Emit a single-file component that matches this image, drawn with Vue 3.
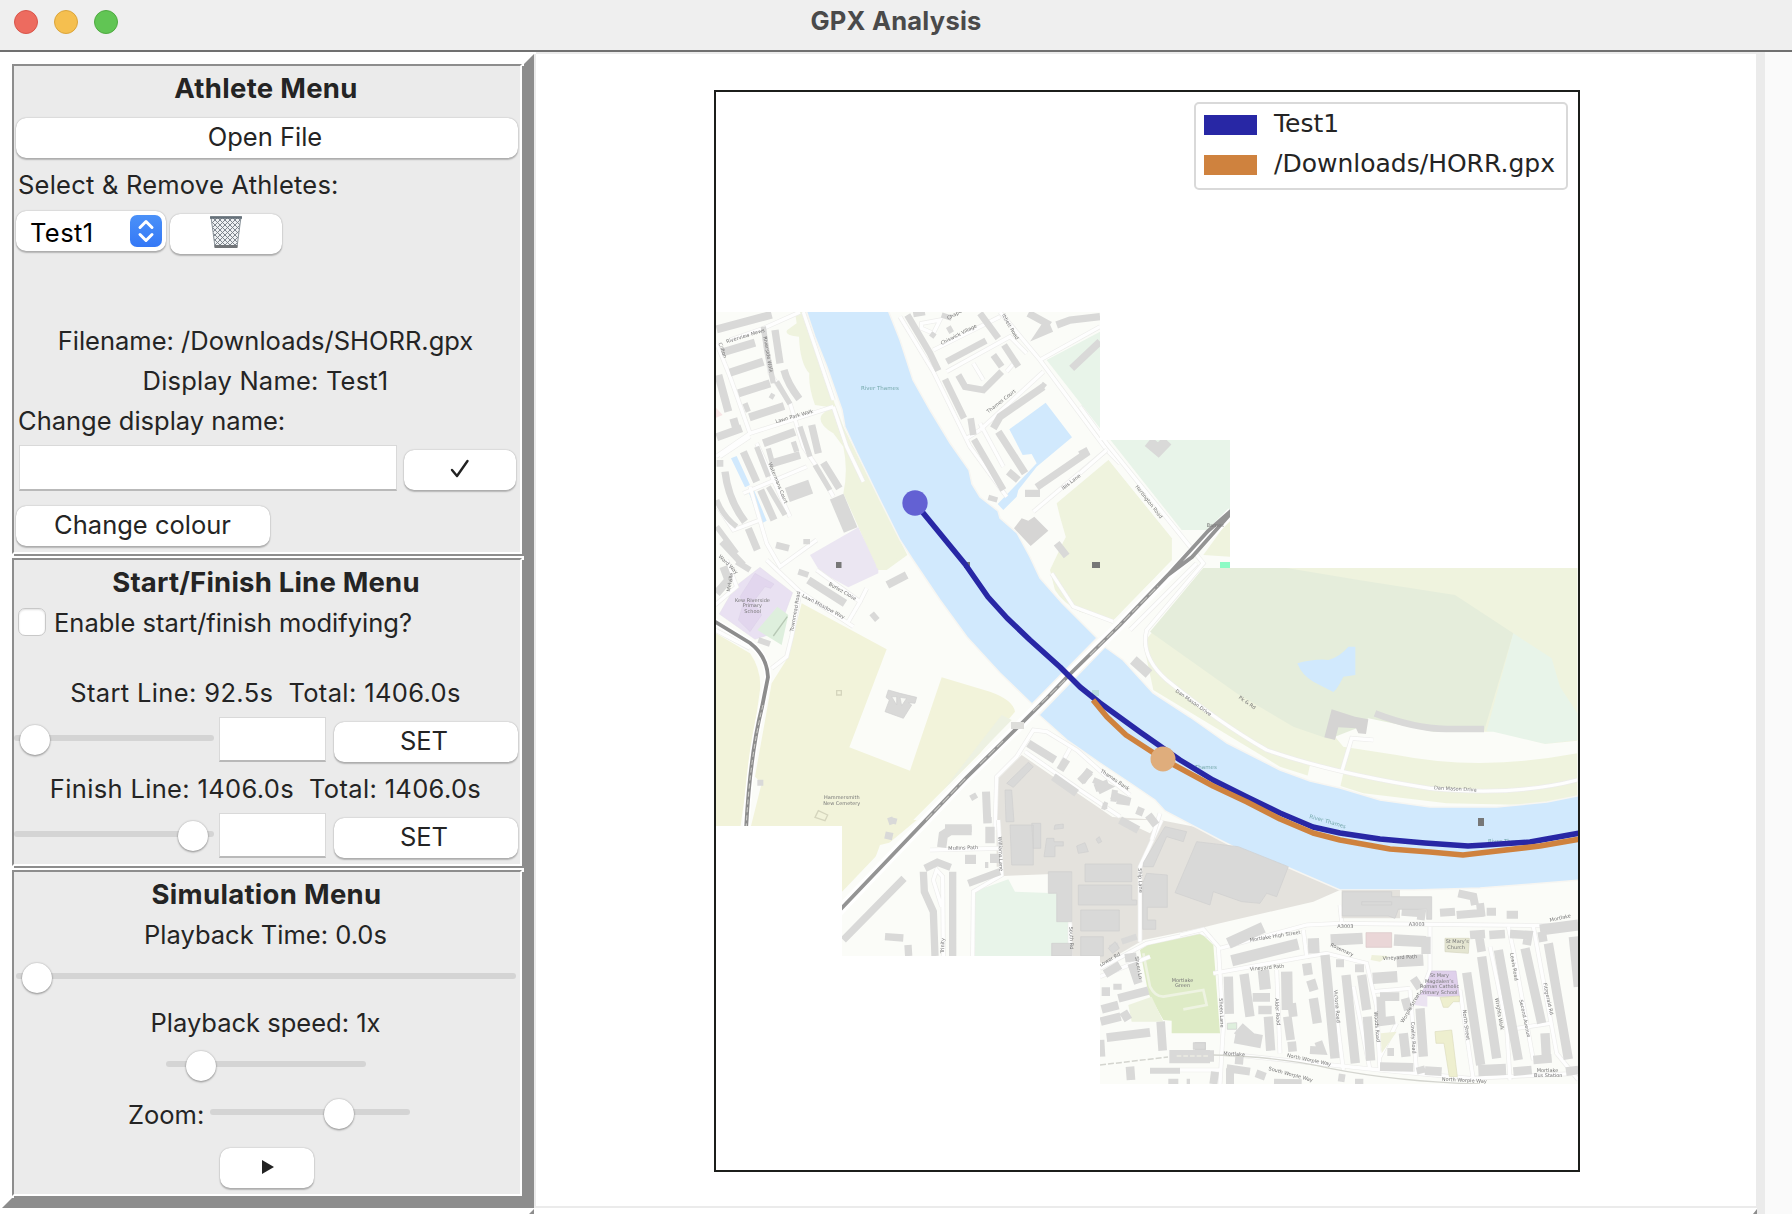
<script setup>
const sheets = [
  {
    at: 'translate(700 300) scale(.33333)',
    roads: [
      'M48 470L150 400L400 320', 'M50 130L90 230L150 400', 'M90 120L190 85L300 36', 'M190 85L210 220L270 310L310 440L350 500L400 590', 'M130 580L320 500',
      'M150 410L60 470M150 560L200 730L240 800L350 720', 'M170 430L270 650', 'M400 320L440 440L490 545', 'M310 36L400 300', 'M40 600L100 690L180 660',
      'M600 50L700 215L810 440L920 590', 'M900 36L1020 180L1220 450L1260 490', 'M1020 180L1200 80', 'M700 150L900 50', 'M740 215L930 110L980 160',
      'M840 390L1030 215', 'M840 370L910 500', 'M1220 450L1000 635', 'M665 70L720 60L700 100L665 85Z', 'M820 190L850 240', 'M920 215L950 180', 'M800 415L840 390'
    ],
    blocks: [
      [24, 'M50 88L215 44M65 158L165 128M90 218L190 185M115 280L210 250M148 352L252 318M50 412L125 385M55 225L85 335M100 355L110 390M215 490L300 465M190 430L285 395'],
      [22, 'M225 90L240 190M252 210Q262 250 298 297M335 375L355 460M370 488L418 565M130 455L170 545M182 570L222 660M75 515Q85 600 135 665M145 685L172 750'],
      [16, 'M190 80L200 150L220 250M230 245L270 312M300 380L330 470M345 495L390 570M170 440L205 530M205 560L255 645M50 600Q70 650 110 680M135 310L145 335M280 425L290 455M50 680L110 760M205 445L220 500'],
      [44, 'M262 585L332 560'], [44, 'M410 590L452 690'], [20, 'M228 735L267 745M65 725L130 795M50 490L70 490'],
      [20, 'M622 45L690 160L715 212M735 238L792 355M812 355L820 405M822 418L910 570M740 185L858 122M840 40L895 115M912 135L955 200M775 225L795 260L850 270L905 215M880 165L905 200'],
      [22, 'M1030 260L900 350L880 385M895 395L975 520M925 515L955 540M1010 562L1165 455M975 580L1020 580M1070 730L1100 768M985 40L1040 70L1020 100L1055 85M1070 75L1110 60L1200 50M1115 205L1200 125'],
      [16, 'M640 44L675 38M745 80L755 98M692 100L705 110M725 45L755 55M865 592L892 600M1025 262L1035 250M310 725L330 725M210 285L222 292']
    ],
    names: [[80, 130, -17, 'Riverview Mews'], [190, 110, 80, 'Riverside Walk'], [228, 370, -16, 'Lawn Park Walk'], [205, 490, 68, 'Watermans Court'], [55, 130, 70, 'Clifton'], [725, 135, -27, 'Chiswick Village'], [745, 60, -30, 'Chapel'], [865, 340, -38, 'Thames Court'], [1090, 570, -38, 'Ibis Lane'], [905, 45, 60, 'Ibbett Road'], [55, 770, 45, 'Ward Way']]
  },
  {
    at: 'translate(700 560) scale(.33333)',
    roads: [
      'M200 0L300 95L460 200', 'M300 95L275 230L260 290L215 325', 'M350 30L480 125L445 185', 'M480 125L500 85', 'M45 135L110 80L80 0',
      'M1290 705L1220 650L1130 570L1040 515L1000 510L950 590L890 650L885 810', 'M975 575L1140 690L1260 770', 'M1110 565L1085 610', 'M1055 40L1120 140L1240 185', 'M45 210L150 265'
    ],
    blocks: [
      [24, 'M325 60L435 130M562 75L620 45M985 550L1065 600M1060 650L1130 700M858 695L862 790M735 805L815 805M1080 630L1100 598M1145 665L1170 630M50 100L85 60L70 20'],
      [18, 'M295 35L325 45M515 160L532 180M175 240L210 252M110 5L150 30M172 668L190 668M570 780L590 785M1180 660L1225 680L1195 695M1245 690L1240 725M1208 738L1222 738M812 715L830 705']
    ],
    names: [[385, 75, 30, 'Burlez Close'], [305, 110, 28, 'Lawn Meadow Way'], [280, 215, -80, 'Townmead Road'], [105, 125, 0, 'Kew Riverside'], [128, 142, 0, 'Primary'], [133, 158, 0, 'School'], [372, 717, 0, 'Hammersmith'], [370, 735, 0, 'New Cemetery'], [90, 95, -80, 'Melville']]
  },
  {
    at: 'translate(830 820) scale(.33333)',
    roads: [
      'M505 0L515 165L430 215L428 408', 'M300 90L505 85', 'M340 408L338 170L320 150L310 180L335 260', 'M995 0L930 140L930 365', 'M810 445L950 370L1110 335L1140 350', 'M720 310L720 408', 'M810 470L960 410'
    ],
    blocks: [
      [28, 'M335 82L340 45L360 32L425 32M480 20L480 70M480 115L510 115M405 118L438 118'],
      [22, 'M415 190L510 155M40 360L222 175M280 155L283 215L310 275L315 408M368 155L368 408M285 145L322 127L362 142M165 350L220 354M234 375L236 408M175 5L190 0M165 45L188 50'],
      [26, 'M825 462L870 435M815 515L840 515M815 568L865 555M812 605L872 590M885 415L920 410M905 430L925 490M865 535L955 512M880 575L895 600M830 653L960 637M992 605L998 692M900 740L903 780M810 660L813 710M1095 680L1128 680'],
      [18, 'M960 752L1050 752M850 500L875 500M840 385L865 375M875 365L920 350M1070 785L1080 785M1015 785L1045 785M465 0L485 0M465 135L475 135']
    ],
    names: [[355, 90, -2, 'Mullins Path'], [505, 50, 88, 'Williams Lane'], [342, 400, -88, 'Trinity'], [925, 145, 88, 'Ship Lane'], [718, 320, 88, 'South Rd'], [812, 440, -30, 'Lower Rd'], [915, 410, 80, 'Sheen Ln'], [1025, 485, 0, 'Mortlake'], [1035, 500, 0, 'Green']]
  },
  {
    at: 'translate(1180 840) scale(.33333)',
    roads: [
      'M0 285L70 268L115 320L130 560L120 732', 'M120 325L380 255L480 250L1195 258', 'M100 400L380 350L370 270', 'M380 350L440 340L560 370L590 500L600 690', 'M290 390L300 640', 'M460 450L490 690', 'M690 450L710 700', 'M750 260L750 390L720 470', 'M840 450L880 720', 'M930 320L980 560L990 720', 'M985 260L1000 330L1060 660',
      'M1060 260L1130 640L1195 720', 'M120 640L600 690', 'M650 550L600 650', 'M600 690L870 715L1195 700', 'M520 440L570 690', 'M580 455L690 445', 'M480 195L485 245', 'M1010 565L1110 550', 'M0 690L120 690'
    ],
    blocks: [
      [34, 'M155 362L355 312M452 300L548 295M642 300L738 305M1080 270L1195 255M400 295L402 340M578 415L652 410M145 310L250 262M320 395L322 510M895 692L978 688M650 365L730 360M0 648L102 648M250 390L256 448'],
      [28, 'M145 410L148 522M192 402L210 530M435 345L465 655M498 405L526 670M545 405L560 510M562 530L572 662M860 398L902 675M905 350L950 655M955 330L1015 660M1035 325L1085 550M1105 310L1165 658M1180 290L1195 440M720 505L730 650M670 580L678 650M1095 580L1100 665M265 530L272 632M380 370L385 405M392 420L402 452M400 475L412 550M738 290L738 342'],
      [26, 'M218 472L270 472M235 510L275 510M335 490L340 530M322 530L332 600M335 605L338 635M600 470L658 470M602 470L605 545L645 540M675 475L685 510M895 275L905 335M870 285L915 282M928 285L975 282M990 282L1045 285L1040 315M600 680L700 682M720 680L725 700M735 692L785 695M1000 695L1055 690M1060 660L1115 655M1158 695L1195 690M1085 275L1090 305'],
      [40, 'M165 590L245 605M175 565L215 600'],
      [24, 'M780 218L825 215M830 225L912 218M835 160L880 170L885 195M900 190L905 230M920 215L948 215M980 224L1014 224M665 215L725 220L722 240M468 370L492 370M525 385L552 385M700 415L720 445M390 630L425 632L415 605M140 685L210 695M150 685L150 732M105 695L100 732M228 700L256 710M282 728L365 730M475 712L495 715M525 728L550 728M622 636L642 636M165 660L190 662']
    ],
    names: [[210, 305, -9, 'Mortlake High Street'], [210, 392, -5, 'Vineyard Path'], [608, 360, -3, 'Vineyard Path'], [450, 318, 25, 'Rosemary'], [285, 475, 86, 'Alder Road'], [462, 450, 85, 'Victoria Road'], [582, 515, 85, 'Woods Road'], [693, 545, 87, 'Cowley Road'], [670, 550, -60, 'Worple Street'], [848, 510, 83, 'North Street'], [945, 475, 80, 'Wrights Walk'], [990, 340, 80, 'Lewis Road'], [1018, 480, 78, 'Second Avenue'], [1090, 430, 78, 'Fitzgerald Rd'], [320, 650, 12, 'North Worple Way'], [265, 690, 15, 'South Worple Way'], [785, 722, 3, 'North Worple Way'], [472, 263, 0, 'A3003'], [686, 258, 0, 'A3003'], [130, 645, 3, 'Mortlake'], [1110, 245, -12, 'Mortlake'], [797, 310, 0, 'St Mary’s'], [802, 328, 0, 'Church'], [750, 411, 0, 'St Mary'], [735, 428, 0, 'Magdalen’s'], [720, 444, 0, 'Roman Catholic'], [720, 461, 0, 'Primary School'], [1070, 695, 0, 'Mortlake'], [1062, 711, 0, 'Bus Station'], [118, 475, 88, 'Sheen Lane']]
  },
  {
    at: 'translate(1080 400) scale(.33333)',
    roads: [
      'M0 20L80 130L330 440L370 490L200 690Q180 770 260 840Q420 970 560 1050Q760 1120 1050 1165Q1300 1190 1492 1140', 'M80 150L0 220', 'M880 1020L815 1015L785 1115', 'M350 490L150 690', 'M240 1240L215 1320'
    ],
    blocks: [
      [30, 'M160 780L207 822'], [20, 'M885 940Q1000 985 1100 987L1212 987'], [24, 'M0 165L25 152M0 1145L30 1115M45 1165L85 1150M95 1185L150 1205L110 1200M170 1230L190 1238M120 1260L175 1290M205 1245L228 1275M68 1215L80 1220'],
      [34, 'M205 125L235 150L262 122']
    ],
    names: [[165, 260, 52, 'Hartington Road'], [285, 875, 35, 'Dan Mason Drive'], [475, 895, 35, 'Pk & Rd'], [1062, 1168, 3, 'Dan Mason Drive'], [60, 1115, 34, 'Thames Bank'], [380, 382, 0, 'Barnes']]
  }
]
</script>

<template>
  <div class="window">
    <header class="titlebar">
      <span class="light red"></span><span class="light amber"></span><span class="light green"></span>
      <h1>GPX Analysis</h1>
    </header>
    <div class="body">
      <aside class="sidebar">
        <section class="panel athlete">
          <h2>Athlete Menu</h2>
          <button class="btn wide">Open File</button>
          <p class="label left first">Select &amp; Remove Athletes:</p>
          <div class="row pick">
            <button class="select"><span>Test1</span>
              <svg class="stepper" width="32" height="32" viewBox="0 0 32 32"><path d="M10 12.5L16 6.500L22 12.5M10 19.5L16 25.500L22 19.5" fill="none" stroke="#fff" stroke-width="3" stroke-linecap="round" stroke-linejoin="round" /></svg>
            </button>
            <button class="btn bin">
              <svg width="32" height="34" viewBox="0 0 32 34">
                <defs><pattern id="mesh" width="5" height="5" patternUnits="userSpaceOnUse"><path d="M0 0L5 5M5 0L0 5" stroke="#737b82" stroke-width=".9" /></pattern></defs>
                <path d="M1 2H31L27 32H5Z" fill="#edf0f2" /><path d="M1 2H31L27 32H5Z" fill="url(#mesh)" stroke="#8b949b" stroke-width="1" />
                <path d="M0 2.5H32" stroke="#66717a" stroke-width="2.6" /><path d="M4.500 31.500H27.500" stroke="#727578" stroke-width="3" />
              </svg>
            </button>
          </div>
          <p class="label filename">Filename: /Downloads/SHORR.gpx</p>
          <p class="label display">Display Name: Test1</p>
          <p class="label left">Change display name:</p>
          <div class="row rename">
            <input class="field" type="text" aria-label="Display name">
            <button class="btn tick"><svg width="20" height="20" viewBox="0 0 20 20"><path d="M2 11L7 17L17.500 2" fill="none" stroke="#222" stroke-width="2.400" stroke-linecap="round" stroke-linejoin="round" /></svg></button>
          </div>
          <button class="btn colour">Change colour</button>
        </section>
        <section class="panel lines">
          <h2>Start/Finish Line Menu</h2>
          <label class="check"><span class="box"></span><span>Enable start/finish modifying?</span></label>
          <p class="label start">Start Line: 92.5s&nbsp; Total: 1406.0s</p>
          <div class="row set">
            <div class="slider"><i :style="{ left: '6px' }"></i></div>
            <input class="field" type="text" aria-label="Start"><button class="btn">SET</button>
          </div>
          <p class="label finish">Finish Line: 1406.0s&nbsp; Total: 1406.0s</p>
          <div class="row set">
            <div class="slider"><i :style="{ left: '164px' }"></i></div>
            <input class="field" type="text" aria-label="Finish"><button class="btn">SET</button>
          </div>
        </section>
        <section class="panel simulation">
          <h2>Simulation Menu</h2>
          <p class="label">Playback Time: 0.0s</p>
          <div class="slider time"><i :style="{ left: '6px' }"></i></div>
          <p class="label speed-label">Playback speed: 1x</p>
          <div class="slider speed"><i :style="{ left: '20px' }"></i></div>
          <div class="row zoom"><span>Zoom:</span><div class="slider"><i :style="{ left: '114px' }"></i></div></div>
          <button class="btn play"><svg width="12" height="14" viewBox="0 0 12 14"><path d="M0 0L12 7L0 14Z" fill="#222" /></svg></button>
        </section>
      </aside>
      <main class="canvas">
        <div class="chart">
          <svg class="map" width="866" height="1082" viewBox="714 90 866 1082">
            <defs>
              <clipPath id="tiles"><path d="M716 312H1100V440H1230V568H1579V1084H1100V956H842V826H716Z" /></clipPath>
              <clipPath id="axes"><rect x="716" y="92" width="862" height="1078" /></clipPath>
            </defs>
            <g clip-path="url(#tiles)"><g class="tiles">
              <rect x="704" y="290" width="886" height="820" fill="#fbfcf8" />
              <!-- parkland and other land use -->
              <g transform="translate(700 300) scale(.33333)">
                <path fill="#eff3de" d="M285 36H312L345 130L400 300L430 380L540 600L622 765L560 810H530L475 680L430 580Q445 510 430 440L400 400Q350 370 365 345L390 322L345 315Q325 260 328 220Q300 190 297 110Q250 105 262 90L290 70Z" />
                <path fill="#e8f4e9" d="M1040 180L1200 95V385Z" />
                <path fill="#ebe6f2" d="M330 765L475 682L535 810V820L445 862L360 815Z" />
                <path fill="#f7e4e4" d="M45 320L68 345L45 355Z" />
              </g>
              <g transform="translate(700 560) scale(.33333)">
                <path fill="#f2f3da" d="M305 130L560 268L448 562L630 632L725 352L870 395Q940 420 945 455L840 580L610 810H150L185 670L165 650L215 370L265 290Z" />
                <path fill="#f2f3da" d="M45 218L150 280Q185 330 180 390L120 810H45Z" /><path fill="#eff3de" d="M527 0L530 25L600 -10V-50H500Z" />
                <path fill="#e9e1f2" stroke="#ded8e3" d="M180 22L278 98L235 215L165 238L58 162L105 80Z" />
                <path fill="#e2d6ee" stroke="#d5cce0" d="M165 40L222 72L212 85L195 80L160 125L185 165L150 215L115 180L130 130L120 110Z" />
                <path fill="#deefdd" d="M172 210L232 140L265 165L245 255Z" /><path d="M220 228L262 170" stroke="#b7c8b5" stroke-width="4" />
                <path fill="#e4e2dd" d="M965 585L1060 650L1280 800V920H890V660Z" />
                <path fill="#edf1e2" d="M905 465L935 480L730 690L800 600Z" />
              </g>
              <g transform="translate(830 820) scale(.33333)">
                <path fill="#f2f3da" d="M36 0H260L170 75L36 215Z" /><path fill="#fbfcf8" d="M150 75L190 65L130 130Z" />
                <path fill="#e4e2dd" d="M515 -30L990 0L1500 100L1530 210L1450 245L1170 310L1110 325L940 360L820 430L725 408V160L520 168Z" />
                <path fill="#e8f4e9" d="M430 215L535 178L555 215L680 220V305H715V408H430Z" />
                <path fill="#deebc6" d="M930 390L960 370L1110 337L1150 375L1170 640H1025V602L1000 600L955 520Z" />
                <path fill="none" stroke="#eef3e2" stroke-width="8" d="M940 400L960 500Q975 530 1000 530L1120 510L1130 555L1060 568" />
                <path fill="#edf2df" d="M895 555L965 530L1000 605H905Z" />
                <path fill="#fbfcf8" d="M875 0L960 40L990 0Z" />
              </g>
              <g transform="translate(1080 400) scale(.33333)">
                <path fill="#e8f4e9" d="M90 120H450V350L410 390H305L60 80V0H0L-40 -60L-20 -80L60 0Z" />
                <path fill="#eff3de" d="M85 180L275 415V480L100 660L0 635L-75 565L-90 510L-50 425Z" />
                <path fill="#eff3de" d="M85 180L275 415V480L100 660L0 635Q-50 610 -75 570L-85 530L-25 450L-40 420L-60 350L-70 310Z" />
                <path fill="#eff3de" d="M450 355V470L370 465Z" />
                <path fill="#eff3de" d="M370 504H1492V1190L1350 1215L1100 1210L850 1180L600 1100L220 870L190 730Z" />
                <path fill="#e5eddb" d="M370 504H620L850 542L1125 585L1300 700L1212 993L740 1015L640 980L470 880L210 695Z" />
                <path fill="#e8f4e9" d="M1300 700L1415 775L1440 860L1492 940V1020L1395 1032L1220 993Z" />
                <path fill="#fbfcf8" d="M765 1010L830 985L865 955L1060 995H1240L1395 1032L1492 1022V1060Q1200 1115 950 1065L790 1040Z" />
                <path fill="#fbfcf8" d="M690 1095L790 1120L780 1165L680 1140Z" />
                <path fill="#d1e9fd" d="M652 790Q710 775 745 780Q780 770 805 740H826V825L790 830Q770 870 760 876L700 845Q665 825 652 790Z" />
              </g>
              <g fill="#d1e9fd" stroke="#f7f6f2" stroke-width="1.5">
                <path d="M806 310L815 337L827 367L842 410L845 427L857 453L880 500L900 540L913 560L940 600L967 637L1000 673L1032 704L1097 638L1062 603L1040 578L1030 557L1017 533L1000 518L998 511L980 497L972 484L969 470L950 443L930 410L913 380L900 340L888 310Z" />
                <path d="M1039 715L1067 740L1100 763L1130 783L1155 800L1165 811L1220 840L1260 860L1287 867L1340 890L1413 890L1480 888L1582 880V795L1547 802L1497 807H1430L1380 800L1340 788L1310 781L1280 770L1227 743L1190 717L1153 693L1123 660L1105 647Z" />
              </g>
              <g transform="translate(700 300) scale(.33333)" fill="#d1e9fd">
                <path d="M1037 308L1116 412L1010 500L955 570L950 590L910 630L893 612L1010 490L995 462L968 465L928 388Z" />
                <path d="M93 475L110 468L150 555L135 562ZM147 580L163 572L200 662L182 672Z" />
              </g>

              <g v-for="(s, i) in sheets" :key="i" :transform="s.at" fill="none">
                <path v-for="(d, n) in s.roads" :key="'c' + n" :d="d" stroke="#ededeb" stroke-width="14" />
                <path v-for="(d, n) in s.roads" :key="'r' + n" :d="d" stroke="#fefefe" stroke-width="10" />
                <path v-for="(b, n) in s.blocks" :key="'b' + n" :d="b[1]" stroke="#d9d9d8" :stroke-width="b[0]" />
              </g>

              <!-- large buildings -->
              <g transform="translate(830 820) scale(.33333)" fill="#d9d9d8" stroke="#cfcfcf" stroke-width="2">
                <path d="M540 15H610V135H545ZM605 10H632V85H610ZM650 55H672V65H700V78H675V110H642ZM765 132H905V185H765ZM655 155H725V305H680V220H655ZM745 195H905V240H920V255H745ZM752 270H868V333H752ZM752 350H820V408H752ZM665 370H725V408H665Z" />
                <path d="M1005 20L1070 35L1060 65L1010 50L970 140H940V128ZM950 160L1012 165V262H952V300H977V328H938V190ZM1100 65L1225 80L1375 140L1340 230L1310 220L1290 250L1235 245L1150 215L1140 255L1035 218Z" />
                <path d="M740 78L765 68L775 95L745 100ZM798 58L808 50L815 65L805 70ZM675 15L700 12V25L672 28ZM835 385L855 365L868 385L848 400Z" />
                <path stroke="none" d="M1018 690H1140V730H1018Z" />
              </g>
              <g transform="translate(700 300) scale(.33333)" fill="#d6d5d4">
                <path d="M942 685L965 655L985 662L1003 650L1045 692L992 738Z" />
              </g>
              <g transform="translate(700 560) scale(.33333)" fill="#d9d9d8" stroke="#cfcfcf" stroke-width="2">
                <path d="M920 670L985 607L1000 620L940 682ZM915 690H935L942 785H918ZM565 390L600 400L650 412L645 430L625 428L635 435L610 475L555 455L568 420L558 412Z" />
                <path fill="#f8f9f5" d="M575 410H590V435ZM600 412L620 415L605 437Z" />
                <path fill="none" stroke="#d5d5bd" stroke-width="4" d="M355 752L383 765L375 782L345 772ZM410 392H424V405H410Z" />
              </g>
              <g transform="translate(1180 840) scale(.33333)" fill="#d9d9d8" stroke="#cdcdcd" stroke-width="2">
                <path fill="#e4e2dd" stroke="none" d="M485 150H660V235H485Z" />
                <path d="M487 155H635V170H755V238H740V208H655L645 235L625 228H487ZM545 185H635V195H545Z" />
                <path fill="#ead6d7" stroke="#dac7c7" d="M558 278H635V322H558Z" />
                <path fill="#e4e5d1" stroke="#d4d5c0" d="M795 295H868L865 340L795 335Z" />
                <path fill="#dfd0eb" stroke="#d0c4dc" d="M755 393H828L838 470L720 467L740 430Z" /><path fill="#ebe3f1" stroke="none" d="M715 465H742V500L702 495Z" />
                <path fill="#eeefcf" stroke="#dcdcbe" d="M780 472L838 468V485H820L805 502H790ZM765 575L815 570L832 710H808L792 610H768Z" />
                <path fill="#eff1dc" stroke="none" d="M602 580L650 575L605 640ZM575 345L625 348L600 365L572 360Z" /><path fill="#deefdd" d="M142 550L170 548V568H142Z" />
                <path d="M40 608H76V628H40Z" /><path fill="none" stroke="#ecebe2" stroke-width="5" stroke-dasharray="14 6" d="M-10 648H90" />
                <path fill="none" stroke="#d4d5cf" stroke-width="4" d="M100 645Q300 650 450 685Q650 725 900 732" />
              </g>
              <path d="M1100 1065L1168 1057" stroke="#d4d5cf" stroke-width="1.5" stroke-dasharray="6 2" />
              <g transform="translate(1080 400) scale(.33333)">
                <path fill="#d5d4d3" d="M755 928L825 950L865 958L858 1002L835 1000L828 985L775 982L765 1020L733 1012Z" />
              </g>

              <!-- railways -->
              <g fill="none">
                <path d="M714 621L750 643Q767 656 768 677L762 707Q750 755 746 830" stroke="#fff" stroke-width="7" />
                <path d="M714 621L750 643Q767 656 768 677L762 707Q750 755 746 830" stroke="#8d8d8d" stroke-width="3.800" />
                <path d="M763 705Q750 755 746 830" stroke="#d0d0cc" stroke-width="1" stroke-dasharray="5 3" />
                <path d="M838 912L966 778L1018 727L1067 677L1120 625L1232 512" stroke="#fff" stroke-width="10" />
                <path d="M838 912L966 778L1018 727L1047 698L1067 677L1120 625L1168 575L1192 557L1232 512M1168 575L1208 531L1232 510" stroke="#949494" stroke-width="3.800" />
                <path d="M926 820L966 778M980 764L1003 741M1033 711L1065 680M1090 655L1158 586" stroke="#c6c6c2" stroke-width="1.100" stroke-dasharray="9 3" />
              </g>
              <g v-for="(s, i) in sheets" :key="'n' + i" :transform="s.at" class="names">
                <text v-for="(n, k) in s.names" :key="k" :transform="`translate(${n[0]} ${n[1]}) rotate(${n[2]})`">{{ n[3] }}</text>
              </g>
              <g class="water-names">
                <text x="861" y="390">River Thames</text>
                <text transform="translate(1309 818) rotate(16)">River Thames</text>
                <text x="1195" y="769">Thames</text>
                <text x="1488" y="843">River Thames</text>
              </g>
              <path d="M1011 722h13v7h-13z" fill="#dededb" />
              <path d="M836 562h5.500v6h-5.500zM964 562h6v6h-6zM1092 562h8v6h-8zM1478 818h6v8h-6z" fill="#777" />
              <path d="M1220 562h10v6h-10z" fill="#8dfbc5" /><path d="M1092 690h7v6h-7z" fill="#b9dddf" />
            </g></g>

            <!-- tracks -->
            <g clip-path="url(#axes)" fill="none" stroke-linejoin="round" stroke-width="5.500">
              <path stroke="#2827a5" d="M915 503L965 564L988 597L1007 618L1030 640L1060 667L1080 687L1100 703L1140 732L1180 760L1213 780L1247 797L1280 813L1313 827L1340 833L1380 839L1425 843L1468 846L1485 845L1530 842L1580 833" />
              <path stroke="#cf823e" d="M1093 700L1107 717L1126 735L1163 759L1213 786L1247 802L1280 819L1313 833L1340 840L1390 849L1430 852L1463 855L1480 853L1540 846L1580 839" />
            </g>
            <circle cx="915" cy="503" r="12.700" fill="#6361d3" /><circle cx="1163" cy="759" r="12.500" fill="#dfad7c" />
            <rect x="715" y="91" width="864" height="1080" fill="none" stroke="#1c1e1b" stroke-width="2" />
          </svg>
          <div class="legend">
            <div class="key"><i class="navy"></i><span>Test1</span></div>
            <div class="key"><i class="orange"></i><span>/Downloads/HORR.gpx</span></div>
          </div>
        </div>
      </main>
      <div class="gutter"></div>
    </div>
    <footer class="foot"><svg width="1792" height="6"><path d="M534 1V6H529ZM1757 1V6H1753Z" fill="#8d8d8d" /><path d="M1757 0H1765V6H1757Z" fill="#ebebeb" /><path d="M1765 0H1792V6H1765Z" fill="#fafafa" /></svg></footer>
  </div>
</template>

<style>
body { background: #fff; overflow: hidden; }
</style>
<style scoped>
* { box-sizing: border-box; }
.window { width: 1792px; height: 1214px; display: flex; flex-direction: column; background: #fff; font-family: Inter, "Liberation Sans", sans-serif; font-size: 25.5px; color: #242424; }
.titlebar { flex: none; height: 52px; background: #efefef; border-bottom: 2px solid #707070; display: flex; align-items: center; gap: 16px; padding: 0 0 6px 14px; position: relative; }
.light { width: 24px; height: 24px; border-radius: 50%; }
.red { background: #ed6b5f; border: 1px solid #d9554a; }
.amber { background: #f5bf4f; border: 1px solid #dba53b; }
.green { background: #61c554; border: 1px solid #4faa41; }
h1 { position: absolute; left: 0; right: 0; top: 0; margin: 0; text-align: center; font-size: 25.5px; line-height: 42px; font-weight: 700; color: #4a4a4a; letter-spacing: .25px; }
.body { flex: none; height: 1156px; display: flex; }
.sidebar { width: 532px; height: 1154px; border: 10px solid; border-color: #fff #8d8d8d #8d8d8d #fff; flex: none; background: #fff; margin: 2px 2px 0 2px; box-shadow: 2px 0 #ebebeb; }
.panel { width: 510px; background: #ebebeb; border: 2px solid; border-color: #8d8d8d #fff #fff #8d8d8d; box-shadow: 2px 2px #8d8d8d; display: flex; flex-direction: column; align-items: center; }
.athlete { height: 490px; margin-bottom: 4px; }
.lines { height: 308px; margin-bottom: 4px; }
.simulation { height: 326px; }
h2 { margin: 0 1px 0 0; font-size: 27.5px; line-height: 44px; height: 44px; font-weight: 700; white-space: nowrap; letter-spacing: .3px; }
.lines h2 { letter-spacing: .2px; margin-right: 2px; }
.athlete h2 { margin-right: 2px; }
.simulation h2 { height: 43px; }
.label { margin: 0; height: 40px; line-height: 40px; white-space: nowrap; align-self: stretch; text-align: center; padding-right: 3px; }
.label.left { text-align: left; padding-left: 4px; }
.label.first { height: 53px; line-height: 54px; letter-spacing: .22px; }
.label.display { letter-spacing: .2px; }
.row { display: flex; align-self: stretch; align-items: flex-start; }
button, input { font: inherit; color: inherit; border: 0; padding: 0; margin: 0; letter-spacing: inherit; }
.btn { height: 40px; border-radius: 10px; background: #fff; box-shadow: 0 0 1.5px rgba(0,0,0,.3), 0 1.5px 1.5px rgba(0,0,0,.22); display: flex; align-items: center; justify-content: center; flex: none; white-space: nowrap; padding-bottom: 3px; }
.wide { width: 502px; margin-top: 8px; padding-right: 4px; }
.pick { padding-left: 2px; height: 43px; }
.select { width: 150px; height: 40px; border-radius: 10px; background: #fff; box-shadow: 0 0 1.5px rgba(0,0,0,.3), 0 1.5px 1.5px rgba(0,0,0,.22); display: flex; align-items: center; justify-content: space-between; padding: 2px 4px 2px 14px; color: #000; margin-right: 4px; letter-spacing: .4px; }
.select span { padding-top: 2px; }
.stepper { background: linear-gradient(#4b91f8, #3478f6); border-radius: 7px; margin-top: -1px; }
.bin { width: 112px; margin-top: 3px; padding-bottom: 4px; }
.filename { margin-top: 67px; }
.rename { margin-top: 4px; padding-left: 5px; }
.field { background: #fff; border: 1px solid #d9d9d9; border-bottom: 2px solid #b9b9b9; height: 46px; border-radius: 0; flex: none; }
.rename .field { width: 378px; }
.tick { width: 112px; margin: 5px 0 0 7px; padding-bottom: 2px; }
.colour { width: 254px; margin-top: 15px; align-self: flex-start; margin-left: 2px; padding-right: 1px; }
.check { height: 36px; align-self: stretch; display: flex; align-items: center; padding-left: 4px; gap: 8px; white-space: nowrap; }
.box { width: 28px; height: 28px; border-radius: 7px; background: #fff; border: 1px solid #c8c8c8; box-shadow: inset 0 1px 2px rgba(0,0,0,.12); }
.start { margin-top: 33px; letter-spacing: .36px; }
.finish { margin-top: 6px; letter-spacing: .34px; }
.set { margin-top: 4px; height: 46px; }
.set .slider { margin: 8px 5px 0 0; }
.set .field { width: 107px; height: 45px; }
.set .btn { width: 184px; margin: 5px 0 0 8px; padding-right: 4px; }
.slider { width: 200px; height: 30px; position: relative; flex: none; display: flow-root; }
.slider::before { content: ""; display: block; height: 6px; margin-top: 10px; border-radius: 3px; background: #d4d4d4; }
.slider i { position: absolute; top: 0; width: 30px; height: 30px; border-radius: 50%; background: #fff; box-shadow: 0 0 2px rgba(0,0,0,.3), 0 1.5px 2px rgba(0,0,0,.25); }
.time { width: 500px; margin-top: 8px; margin-right: 2px; }
.speed-label { margin-top: 10px; }
.speed { margin-top: 8px; margin-right: 2px; }
.zoom { margin-top: 18px; height: 30px; line-height: 32px; padding-left: 114px; gap: 6px; }
.zoom span { width: 76px; flex: none; white-space: nowrap; }
.play { width: 94px; margin-top: 19px; padding: 0 0 2px 1px; }
.canvas { width: 1220px; height: 1156px; border-top: 2px solid #ebebeb; border-bottom: 2px solid #ebebeb; background: #fff; flex: none; padding: 36px 0 0 178px; }
.chart { width: 866px; height: 1082px; position: relative; }
.map { display: block; }
.tiles { filter: blur(.5px); }
.legend { position: absolute; left: 480px; top: 12px; width: 374px; height: 88px; border: 2px solid #d9d9d9; border-radius: 5px; background: #fff; padding: 0 0 0 8px; font: 25px/40px "DejaVu Sans", sans-serif; }
.key { display: flex; align-items: center; height: 40px; white-space: nowrap; }
.key i { width: 53px; height: 20px; margin: 1px 17px 0 0; }
.navy { background: #2827a5; }
.orange { background: #cf823e; }
.gutter { flex: 1; border-left: 9px solid #ebebeb; background: #fafafa; }
.foot { height: 6px; flex: none; }
.foot svg { display: block; }
.names text { font: 15px "DejaVu Sans", sans-serif; fill: #777; }
.water-names text { font: 5.500px "DejaVu Sans", sans-serif; fill: #76a9ac; }
</style>
